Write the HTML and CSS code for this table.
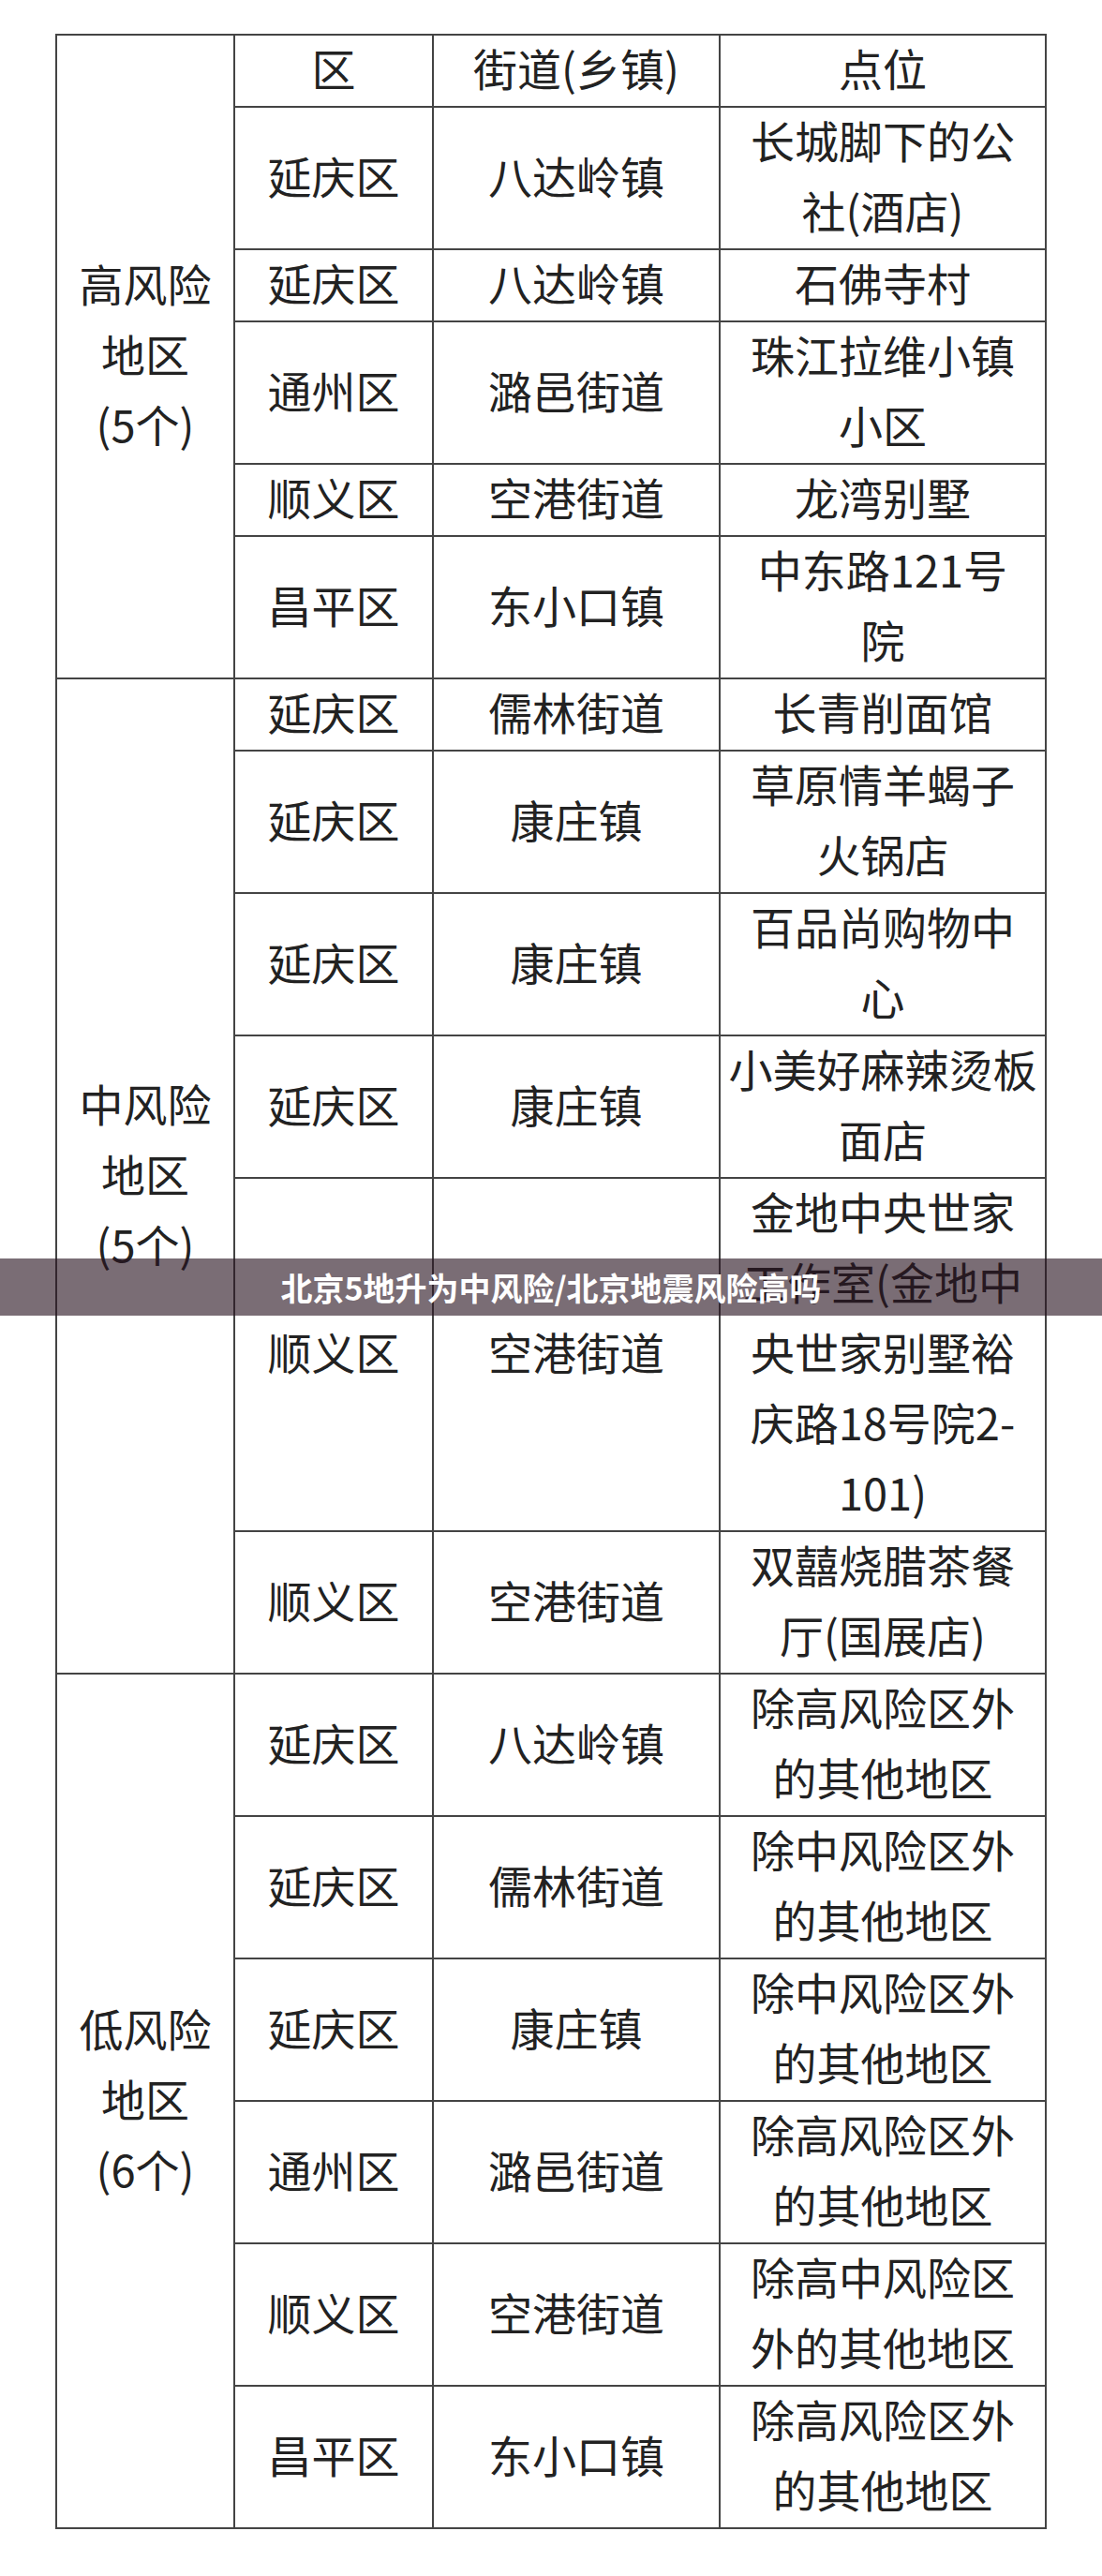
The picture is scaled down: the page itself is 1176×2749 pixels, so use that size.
FILE: index.html
```html
<!DOCTYPE html>
<html lang="zh-CN">
<head>
<meta charset="utf-8">
<title>北京5地升为中风险/北京地震风险高吗</title>
<link rel="stylesheet" href="styles.css">
</head>
<body>
<div class="page">
  <table class="risk">
    <colgroup>
      <col class="c1"><col class="c2"><col class="c3"><col class="c4">
    </colgroup>
    <tbody>
      <tr>
        <td rowspan="6"><span class="t">高风险<br>地区<br>(5个)</span></td>
        <td><span class="t">区</span></td><td><span class="t">街道(乡镇)</span></td><td><span class="t">点位</span></td>
      </tr>
      <tr><td><span class="t">延庆区</span></td><td><span class="t">八达岭镇</span></td><td><span class="t">长城脚下的公<br>社(酒店)</span></td></tr>
      <tr><td><span class="t">延庆区</span></td><td><span class="t">八达岭镇</span></td><td><span class="t">石佛寺村</span></td></tr>
      <tr><td><span class="t">通州区</span></td><td><span class="t">潞邑街道</span></td><td><span class="t">珠江拉维小镇<br>小区</span></td></tr>
      <tr><td><span class="t">顺义区</span></td><td><span class="t">空港街道</span></td><td><span class="t">龙湾别墅</span></td></tr>
      <tr><td><span class="t">昌平区</span></td><td><span class="t">东小口镇</span></td><td><span class="t">中东路121号<br>院</span></td></tr>

      <tr>
        <td rowspan="6"><span class="t">中风险<br>地区<br>(5个)</span></td>
        <td><span class="t">延庆区</span></td><td><span class="t">儒林街道</span></td><td><span class="t">长青削面馆</span></td>
      </tr>
      <tr><td><span class="t">延庆区</span></td><td><span class="t">康庄镇</span></td><td><span class="t">草原情羊蝎子<br>火锅店</span></td></tr>
      <tr><td><span class="t">延庆区</span></td><td><span class="t">康庄镇</span></td><td><span class="t">百品尚购物中<br>心</span></td></tr>
      <tr><td><span class="t">延庆区</span></td><td><span class="t">康庄镇</span></td><td><span class="t">小美好麻辣烫板<br>面店</span></td></tr>
      <tr><td><span class="t">顺义区</span></td><td><span class="t">空港街道</span></td><td><span class="t">金地中央世家<br>工作室(金地中<br>央世家别墅裕<br>庆路18号院2-<br>101)</span></td></tr>
      <tr><td><span class="t">顺义区</span></td><td><span class="t">空港街道</span></td><td><span class="t">双囍烧腊茶餐<br>厅(国展店)</span></td></tr>

      <tr>
        <td rowspan="6"><span class="t">低风险<br>地区<br>(6个)</span></td>
        <td><span class="t">延庆区</span></td><td><span class="t">八达岭镇</span></td><td><span class="t">除高风险区外<br>的其他地区</span></td>
      </tr>
      <tr><td><span class="t">延庆区</span></td><td><span class="t">儒林街道</span></td><td><span class="t">除中风险区外<br>的其他地区</span></td></tr>
      <tr><td><span class="t">延庆区</span></td><td><span class="t">康庄镇</span></td><td><span class="t">除中风险区外<br>的其他地区</span></td></tr>
      <tr><td><span class="t">通州区</span></td><td><span class="t">潞邑街道</span></td><td><span class="t">除高风险区外<br>的其他地区</span></td></tr>
      <tr><td><span class="t">顺义区</span></td><td><span class="t">空港街道</span></td><td><span class="t">除高中风险区<br>外的其他地区</span></td></tr>
      <tr><td><span class="t">昌平区</span></td><td><span class="t">东小口镇</span></td><td><span class="t">除高风险区外<br>的其他地区</span></td></tr>
    </tbody>
  </table>
  <div class="banner">北京5地升为中风险/北京地震风险高吗</div>
</div>
</body>
</html>
```

FILE: styles.css
```css
html, body {
  margin: 0;
  padding: 0;
  background: #ffffff;
}

.page {
  position: relative;
  width: 1176px;
  min-height: 2749px;
  padding-top: 36px;
  box-sizing: border-box;
}

.risk {
  border-collapse: collapse;
  table-layout: fixed;
  width: 1058px;
  margin: 0 auto;
  font-family: "Noto Sans CJK SC", "Noto Sans", sans-serif;
  font-size: 47px;
  font-weight: 400;
  color: #222222;
}

.risk .c1 { width: 190px; }
.risk .c2 { width: 212px; }
.risk .c3 { width: 306px; }
.risk .c4 { width: 348px; }

.risk td {
  border: 2px solid #444444;
  padding: 0;
  line-height: 75px;
  text-align: center;
  vertical-align: middle;
  white-space: nowrap;
  overflow: hidden;
}

.risk .t {
  line-height: 47px;
  vertical-align: 4px;
}

.banner {
  position: absolute;
  left: 0;
  top: 1343px;
  width: 100%;
  height: 61px;
  display: flex;
  align-items: center;
  justify-content: center;
  background: rgba(40, 20, 32, 0.62);
  color: #ffffff;
  font-family: "Noto Sans CJK SC", "Noto Sans", sans-serif;
  font-size: 34px;
  font-weight: 700;
  line-height: 1;
}
```
